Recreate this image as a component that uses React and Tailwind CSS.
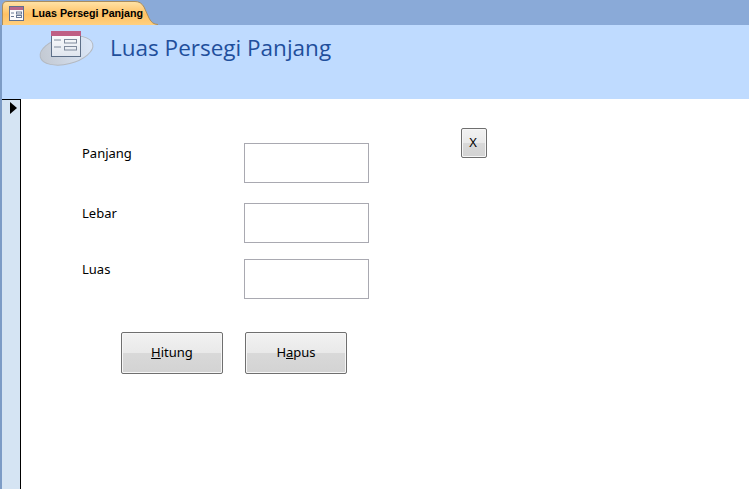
const FormIcon = ({ className }) => (
  <svg className={className} viewBox="0 0 15 15" fill="none">
    <rect x="0.5" y="0.5" width="14" height="14" fill="#fbfbfd" stroke="#5f6f8f" />
    <rect x="1" y="1" width="13" height="3" fill="#b8678a" />
    <path d="M2 7h3M2 10.5h3" stroke="#6b7a96" />
    <rect x="7.5" y="6" width="5" height="2" stroke="#6b7a96" />
    <rect x="7.5" y="9.5" width="5" height="2" stroke="#6b7a96" />
  </svg>
);

const TabShape = () => (
  <svg className="absolute inset-0" width="158" height="25" viewBox="0 0 158 25" fill="none">
    <defs>
      <linearGradient id="tabFill" x1="0" y1="0" x2="0" y2="1">
        <stop offset="0" stopColor="#ffe3a8" />
        <stop offset="0.55" stopColor="#ffc163" />
        <stop offset="1" stopColor="#ffd080" />
      </linearGradient>
    </defs>
    <path
      d="M2.5 25V6Q2.5 1.5 7 1.5H135Q141 1.5 144 7L149 18Q152 24.5 158 24.5V25Z"
      fill="url(#tabFill)"
    />
    <path
      d="M2.5 25V6Q2.5 1.5 7 1.5H135Q141 1.5 144 7L149 18Q152 24.5 158 24.5"
      stroke="#ab8d5c"
    />
  </svg>
);

const HeaderLogo = () => (
  <svg width="70" height="50" viewBox="0 0 70 50" fill="none">
    <defs>
      <linearGradient id="disc" x1="0" y1="0" x2="1" y2="0">
        <stop offset="0" stopColor="#c3c9d2" />
        <stop offset="1" stopColor="#dbe7f8" />
      </linearGradient>
      <linearGradient id="sheet" x1="0" y1="0" x2="0" y2="1">
        <stop offset="0" stopColor="#ffffff" />
        <stop offset="1" stopColor="#dfe5ee" />
      </linearGradient>
    </defs>
    <ellipse cx="36.5" cy="25.5" rx="27" ry="13.5" transform="rotate(-14 36.5 25.5)" fill="url(#disc)" stroke="#b4b9c0" />
    <rect x="21.5" y="6.5" width="29" height="25" fill="url(#sheet)" stroke="#5d6f88" />
    <rect x="21" y="6" width="30" height="5" fill="#bf5f85" />
    <path d="M24 15h7M24 22h7" stroke="#7f8a9c" />
    <rect x="34.5" y="14.5" width="12" height="3.5" stroke="#7f8a9c" />
    <rect x="34.5" y="21.5" width="12" height="3.5" stroke="#7f8a9c" />
  </svg>
);

const Field = ({ label }) => (
  <div className="flex items-start">
    <span className="w-[162px] mt-[1px] text-[13px] leading-[18px] text-black">{label}</span>
    <div className="w-[125px] h-[40px] border border-[#a9a9b1] bg-white"></div>
  </div>
);

const CommandButton = ({ className, children }) => (
  <button className={`relative overflow-hidden border border-[#6f6f6f] rounded-[2px] shadow-[inset_0_0_0_1px_#f6f6f6] bg-[linear-gradient(#f2f2f2_0%,#e9e9e9_49%,#d9d9d9_50%,#d3d3d3_100%)] text-[13px] text-black flex items-center justify-center ${className}`}>
    <span>{children}</span>
  </button>
);

export default function App() {
  return (
    <div className="w-[749px] h-[489px] overflow-hidden bg-white flex flex-col font-['Noto_Sans',sans-serif]">
      <div className="h-[25px] bg-[#8aaad8]">
        <div className="relative h-[25px] w-[158px]">
          <TabShape />
          <div className="relative h-[25px] pt-[1px] flex items-center gap-[8px] pl-[9px]">
            <FormIcon className="w-[15px] h-[15px]" />
            <span className="font-['Liberation_Sans',sans-serif] font-bold text-[10.7px] text-black whitespace-nowrap">Luas Persegi Panjang</span>
          </div>
        </div>
      </div>

      <div className="h-[74px] bg-[#bfdbff] border-l-2 border-[#7d9cc6] flex items-start">
        <div className="ml-[28px]">
          <HeaderLogo />
        </div>
        <h1 className="ml-[10px] mt-[5px] text-[22.5px] leading-[36px] text-[#1f4f9c] font-['Open_Sans',sans-serif] whitespace-nowrap">Luas Persegi Panjang</h1>
      </div>

      <div className="flex-1 flex min-h-0 bg-[#7d9cc6]">
        <div className="w-[19px] ml-[2px] bg-[#d5e4f3] border-t border-r border-black">
          <div className="ml-[8px] mt-[2px] w-0 h-0 border-y-[6px] border-y-transparent border-l-[7px] border-l-black"></div>
        </div>
        <div className="flex-1 bg-white flex items-start pl-[61px] pt-[29px]">
          <div className="flex flex-col pt-[15px]">
            <div className="flex flex-col gap-[20px]">
              <Field label="Panjang" />
              <div className="flex flex-col gap-[16px]">
                <Field label="Lebar" />
                <Field label="Luas" />
              </div>
            </div>
            <div className="flex gap-[22px] mt-[33px] ml-[39px]">
              <CommandButton className="w-[102px] h-[42px]"><u>H</u>itung</CommandButton>
              <CommandButton className="w-[102px] h-[42px]">H<u>a</u>pus</CommandButton>
            </div>
          </div>
          <CommandButton className="w-[26px] h-[30px] ml-[92px] pr-[2px]">X</CommandButton>
        </div>
      </div>
    </div>
  );
}
